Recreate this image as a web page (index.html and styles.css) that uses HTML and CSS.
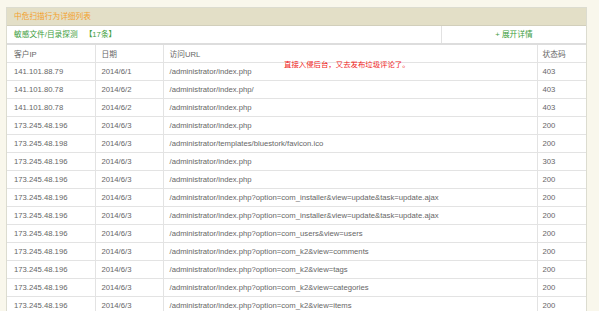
FILE: index.html
```html
<!DOCTYPE html>
<html lang="zh">
<head>
<meta charset="utf-8">
<title>中危扫描行为详细列表</title>
<link rel="stylesheet" href="styles.css">
</head>
<body>
<div class="panel">
  <div class="panel-title">中危扫描行为详细列表</div>
  <div class="subbar">
    <div class="sub-left">敏感文件/目录探测<span class="count">【17条】</span></div>
    <div class="sub-right">+ 展开详情</div>
  </div>
  <div class="note">直接入侵后台，又去发布垃圾评论了。</div>
  <table class="grid">
    <colgroup>
      <col class="c-ip"><col class="c-date"><col class="c-url"><col class="c-code">
    </colgroup>
    <thead>
      <tr><td>客户IP</td><td>日期</td><td>访问URL</td><td>状态码</td></tr>
    </thead>
    <tbody>
      <tr><td>141.101.88.79</td><td>2014/6/1</td><td>/administrator/index.php</td><td>403</td></tr>
      <tr><td>141.101.80.78</td><td>2014/6/2</td><td>/administrator/index.php/</td><td>403</td></tr>
      <tr><td>141.101.80.78</td><td>2014/6/2</td><td>/administrator/index.php</td><td>403</td></tr>
      <tr><td>173.245.48.196</td><td>2014/6/3</td><td>/administrator/index.php</td><td>200</td></tr>
      <tr><td>173.245.48.198</td><td>2014/6/3</td><td>/administrator/templates/bluestork/favicon.ico</td><td>200</td></tr>
      <tr><td>173.245.48.196</td><td>2014/6/3</td><td>/administrator/index.php</td><td>303</td></tr>
      <tr><td>173.245.48.196</td><td>2014/6/3</td><td>/administrator/index.php</td><td>200</td></tr>
      <tr><td>173.245.48.196</td><td>2014/6/3</td><td>/administrator/index.php?option=com_installer&amp;view=update&amp;task=update.ajax</td><td>200</td></tr>
      <tr><td>173.245.48.196</td><td>2014/6/3</td><td>/administrator/index.php?option=com_installer&amp;view=update&amp;task=update.ajax</td><td>200</td></tr>
      <tr><td>173.245.48.196</td><td>2014/6/3</td><td>/administrator/index.php?option=com_users&amp;view=users</td><td>200</td></tr>
      <tr><td>173.245.48.196</td><td>2014/6/3</td><td>/administrator/index.php?option=com_k2&amp;view=comments</td><td>200</td></tr>
      <tr><td>173.245.48.196</td><td>2014/6/3</td><td>/administrator/index.php?option=com_k2&amp;view=tags</td><td>200</td></tr>
      <tr><td>173.245.48.196</td><td>2014/6/3</td><td>/administrator/index.php?option=com_k2&amp;view=categories</td><td>200</td></tr>
      <tr><td>173.245.48.196</td><td>2014/6/3</td><td>/administrator/index.php?option=com_k2&amp;view=items</td><td>200</td></tr>
    </tbody>
  </table>
</div>
</body>
</html>
```

FILE: styles.css
```css
html, body {
  margin: 0;
  padding: 0;
}
body {
  background: #f9f7ec;
  font-family: "Liberation Sans", "Noto Sans CJK SC", sans-serif;
  font-size: 7.7px;
  color: #666;
  padding: 7px 0 0 6px;
  height: 311px;
  overflow: hidden;
  box-sizing: border-box;
}
.panel {
  position: relative;
  width: 581px;
  box-sizing: border-box;
  border: 1px solid #dcdcd0;
  border-bottom: none;
  background: #fff;
}
.panel-title {
  height: 17px;
  line-height: 17px;
  background: #e3dfc7;
  border-bottom: 1px solid #d2cfbb;
  color: #f3a12c;
  padding-left: 7px;
}
.subbar {
  display: flex;
  height: 17px;
  line-height: 17px;
  border-bottom: 2px solid #dddddd;
}
.sub-left {
  flex: 1;
  padding-left: 7px;
  color: #3d9d3d;
}
.count {
  margin-left: 7px;
}
.sub-right {
  width: 144px;
  border-left: 1px solid #e2e2e2;
  text-align: center;
  color: #3d9d3d;
}
.note {
  position: absolute;
  left: 277px;
  top: 51px;
  color: #f01818;
  font-size: 7.4px;
  line-height: 12px;
  white-space: nowrap;
}
.grid {
  width: 100%;
  border-collapse: collapse;
  table-layout: fixed;
}
.c-ip { width: 88px; }
.c-date { width: 68px; }
.c-url { width: 374px; }
.c-code { width: auto; }
.grid td {
  height: 18px;
  padding: 0 0 0 6px;
  border-top: 1px solid #e3e3e3;
  border-left: 1px solid #e3e3e3;
  white-space: nowrap;
  overflow: hidden;
  box-sizing: border-box;
  vertical-align: middle;
}
.grid thead td {
  border-top: none;
  height: 17px;
}
.grid td:first-child {
  border-left: none;
  padding-left: 7px;
}
.grid td:last-child {
  padding-left: 5px;
}
```
